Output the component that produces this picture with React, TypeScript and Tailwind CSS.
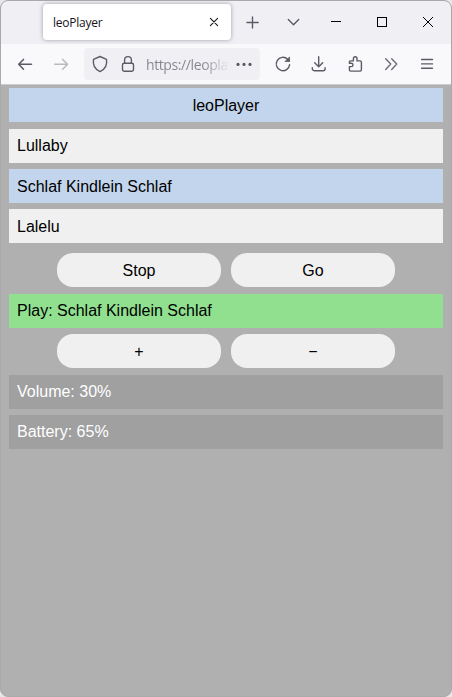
import type { ReactNode } from "react";

function Icon({ children, className = "text-[#5b5b66]" }: { children: ReactNode; className?: string }) {
  return (
    <svg
      width="20"
      height="20"
      viewBox="0 0 20 20"
      fill="none"
      stroke="currentColor"
      strokeWidth="1.4"
      strokeLinecap="round"
      strokeLinejoin="round"
      className={`shrink-0 ${className}`}
    >
      {children}
    </svg>
  );
}

function Tool({ children, className }: { children: ReactNode; className?: string }) {
  return (
    <button className="flex h-8 w-9 items-center justify-center">
      <Icon className={className}>{children}</Icon>
    </button>
  );
}

function TabBar() {
  return (
    <div className="flex h-[43px] items-start bg-[#f0eff4] pl-[42px] pt-[3px] font-['Open_Sans',sans-serif]">
      <div className="flex h-9 w-[188px] items-center justify-between rounded-[4px] bg-white pl-[10px] pr-[7px] shadow-[0_0_4px_rgba(128,128,142,0.75)]">
        <span className="pt-0.5 text-[12px] tracking-[-0.25px] text-[#15141a]">leoPlayer</span>
        <Icon className="text-[#15141a]">
          <path strokeWidth="1.1" d="M6.4 6.4l7.2 7.2M13.6 6.4l-7.2 7.2" />
        </Icon>
      </div>
      <button className="flex h-9 w-[43px] items-center justify-center">
        <Icon>
          <path d="M9.5 4.9v11.2M4 10.5h11.2" />
        </Icon>
      </button>
      <button className="flex h-9 w-[39px] items-center justify-center">
        <Icon>
          <path d="M4.3 7.5l5.2 5.2 5.2-5.2" />
        </Icon>
      </button>
      <button className="flex h-9 w-[46px] items-center justify-center">
        <Icon className="text-black">
          <path strokeWidth="1" strokeLinecap="butt" d="M5 9.5h10" />
        </Icon>
      </button>
      <button className="flex h-9 w-[46px] items-center justify-center">
        <Icon className="text-black">
          <rect x="5.5" y="5.5" width="9" height="9" strokeWidth="1" strokeLinejoin="miter" />
        </Icon>
      </button>
      <button className="flex h-9 w-[46px] items-center justify-center">
        <Icon className="text-black">
          <path strokeWidth="1" strokeLinecap="butt" d="M5 5l10 10M15 5l-10 10" />
        </Icon>
      </button>
    </div>
  );
}

function Toolbar() {
  return (
    <div className="flex h-[41px] items-start border-b border-[#cccccf] bg-[#f9f9fb] pl-[6px] pt-1">
      <Tool>
        <path strokeWidth="1.5" d="M16.5 10.3H3.9M8.5 5.4l-4.8 4.9 4.8 4.9" />
      </Tool>
      <Tool className="text-[#b9b9bf]">
        <path strokeWidth="1.5" d="M3.7 10.3h12.6M11.7 5.4l4.8 4.9-4.8 4.9" />
      </Tool>
      <div className="mx-[5px] flex h-8 w-44 items-center rounded-[4px] bg-[#f0f0f4] pl-[6px] pr-[6px]">
        <Icon>
          <path d="M10 2.5L16.5 5.3c.8 4.9-1.2 9.8-6.5 12.3C4.7 15.1 2.7 10.2 3.5 5.3z" />
        </Icon>
        <Icon className="ml-2 text-[#5b5b66]">
          <rect x="4.5" y="9.3" width="11" height="8" rx="1.7" />
          <path d="M6.6 9.3V6a3.4 3.4 0 0 1 6.8 0v3.3" />
        </Icon>
        <div className="ml-2 mr-1 flex-1 overflow-hidden whitespace-nowrap bg-linear-to-r from-[#84848d] from-68% to-transparent bg-clip-text pt-0.5 font-['Open_Sans',sans-serif] text-[14px] leading-5 tracking-[-0.4px] text-transparent">
          https://leoplay
        </div>
        <Icon className="text-[#5b5b66]">
          <g fill="currentColor" stroke="none">
            <circle cx="4" cy="10.4" r="1.6" />
            <circle cx="10" cy="10.4" r="1.6" />
            <circle cx="16" cy="10.4" r="1.6" />
          </g>
        </Icon>
      </div>
      <Tool>
        <path d="M16.6 10.6a6.7 6.7 0 1 1-2-5.4l1.6 1.6" />
        <path fill="currentColor" strokeWidth=".8" d="M16.5 3.3v4.2h-4.2z" />
      </Tool>
      <Tool>
        <path d="M9.7 2.8v9.7M5.7 8.7l4 4 4-4M3.3 13.7v1a2 2 0 0 0 2 2h8.8a2 2 0 0 0 2-2v-1" />
      </Tool>
      <Tool>
        <path d="M5.5 6.9h2.9V4.6a1.8 1.8 0 0 1 3.6 0v2.3h3.1a1.3 1.3 0 0 1 1.3 1.3v7.6a1.3 1.3 0 0 1-1.3 1.3H5.7a1.3 1.3 0 0 1-1.3-1.3v-3.2h1.9a1.7 1.7 0 0 0 0-3.4H4.4V8a1.1 1.1 0 0 1 1.1-1.1z" />
      </Tool>
      <Tool className="text-[#6c6c76]">
        <path d="M4.7 4.8l5 5.3-5 5.3M10.7 4.8l5 5.3-5 5.3" />
      </Tool>
      <Tool>
        <path d="M4.6 5.5h10.9M4.6 9.9h10.9M4.6 14.3h10.9" />
      </Tool>
    </div>
  );
}

function Row({ children, className }: { children: ReactNode; className: string }) {
  return <div className={`h-[34px] px-2 ${className}`}>{children}</div>;
}

function Pill({ children }: { children: ReactNode }) {
  return (
    <button className="flex h-[34px] w-[164px] justify-center rounded-2xl bg-[#f0f0f0] leading-9">{children}</button>
  );
}

export default function App() {
  return (
    <div className="h-[697px] w-[452px] overflow-hidden bg-[#e8e8e8]">
      <div className="flex h-full flex-col overflow-hidden rounded-[8px] border border-[#a9a9ab] bg-[#b0b0b0]">
        <TabBar />
        <Toolbar />
        <main className="flex flex-col px-2 pt-[3px] font-['Liberation_Sans',Arial,sans-serif] text-base text-black">
          <Row className="bg-[#c3d5ed] text-center leading-9">leoPlayer</Row>
          <Row className="mt-[7px] bg-[#f0f0f0] leading-[34px]">Lullaby</Row>
          <Row className="mt-1.5 bg-[#c3d5ed] leading-9">Schlaf Kindlein Schlaf</Row>
          <Row className="mt-1.5 bg-[#f0f0f0] leading-9">Lalelu</Row>
          <div className="mt-2.5 flex justify-center gap-2.5">
            <Pill>Stop</Pill>
            <Pill>Go</Pill>
          </div>
          <Row className="mt-[7px] bg-[#90e090] leading-[34px]">Play: Schlaf Kindlein Schlaf</Row>
          <div className="mt-1.5 flex justify-center gap-2.5">
            <Pill>+</Pill>
            <Pill>−</Pill>
          </div>
          <Row className="mt-[7px] bg-[#a0a0a0] leading-[34px] text-white">Volume: 30%</Row>
          <Row className="mt-1.5 bg-[#a0a0a0] leading-[34px] text-white">Battery: 65%</Row>
        </main>
      </div>
    </div>
  );
}
